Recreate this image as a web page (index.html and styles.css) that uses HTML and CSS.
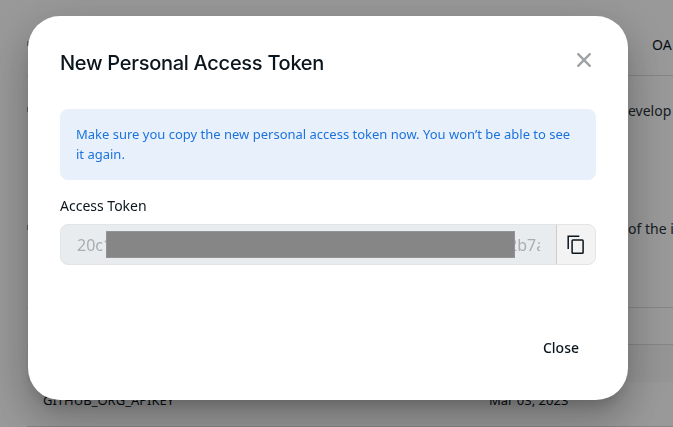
FILE: index.html
```html
<!DOCTYPE html>
<html lang="en">
<head>
<meta charset="utf-8">
<title>New Personal Access Token</title>
<link rel="stylesheet" href="styles.css">
</head>
<body>
<main class="page">
  <div class="row row-tabs"><i class="edge"></i><span class="tab">OA</span></div>
  <div class="row row-info">
    <p class="info"><i class="edge"></i>evelop</p>
    <p class="info"><i class="edge"></i>of the i</p>
  </div>
  <div class="row row-tools"></div>
  <div class="row row-head"></div>
  <div class="row row-token"><span class="token-name">GITHUB_ORG_APIKEY</span><span class="token-date">Mar 03, 2023</span></div>
</main>
<div class="backdrop">
  <section class="dialog" role="dialog" aria-modal="true">
    <header class="dialog-header">
      <h1 class="title">New Personal Access Token</h1>
      <button class="dismiss" type="button">
        <svg width="16" height="16" viewBox="0 0 16 16"><path d="M2.2 2.2 13.8 13.8M13.8 2.2 2.2 13.8"/></svg>
      </button>
    </header>
    <p class="notice">Make sure you copy the new personal access token now. You won’t be able to see it again.</p>
    <label class="label">Access Token</label>
    <div class="field">
      <div class="value"><span class="start">20c1</span><span class="mask"></span><span class="end"><span>2b7a</span></span></div>
      <button class="copy" type="button">
        <svg width="18" height="20" viewBox="0 0 18 20"><path d="M1.2 14V1.2H12.3"/><rect x="5.1" y="4.9" width="11" height="13.4" rx=".8"/></svg>
      </button>
    </div>
    <footer class="actions"><button class="close" type="button">Close</button></footer>
  </section>
</div>
</body>
</html>
```
FILE: styles.css
```css
* { box-sizing: border-box; }
body {
  margin: 0;
  width: 673px;
  height: 427px;
  overflow: hidden;
  background: #fff;
  color: #0b151d;
  font: 14px/20px "Noto Sans", sans-serif;
}
button { border: 0; padding: 0; background: none; color: inherit; font: inherit; }
svg { display: block; fill: none; }
.page { height: 427px; display: flex; flex-direction: column; }
.row { margin-left: 27px; border-bottom: 1px solid #dedede; flex: none; }
.row-tabs { height: 76px; padding-top: 35px; display: flex; white-space: nowrap; }
.tab { font-weight: 450; }
.edge { width: 2px; height: 5px; margin: 6px 599px 0 0; background: #999; flex: none; }
.row-tabs .edge { margin-right: 623px; }
.row-info {
  height: 232px;
  padding-top: 25px;
  display: flex;
  flex-direction: column;
  gap: 98px;
  white-space: nowrap;
}
.info { margin: 0; display: flex; color: #29323a; }
.row-tools { height: 37px; }
.row-head { height: 37px; background: #f8f8f8; border: 0; }
.row-token { height: 45px; padding: 8px 0 0 16px; display: flex; font-size: 13px; }
.token-name { width: 446px; }
.backdrop {
  position: fixed;
  inset: 0;
  padding: 16px 45px 27px 28px;
  background: rgba(0, 0, 0, .4);
}
.dialog {
  width: 600px;
  height: 384px;
  padding: 32px;
  border-radius: 32px;
  background: #fff;
  display: flex;
  flex-direction: column;
  box-shadow: 0 11px 15px -7px rgba(0, 0, 0, .2), 0 24px 38px 3px rgba(0, 0, 0, .14), 0 9px 46px 8px rgba(0, 0, 0, .12);
}
.dialog-header { height: 61px; display: flex; justify-content: space-between; }
.title {
  margin: 0;
  font: 500 20px/30px Inter, sans-serif;
  letter-spacing: -.28px;
  white-space: nowrap;
}
.dismiss { width: 24px; height: 24px; display: grid; place-items: center; }
.dismiss svg { stroke: #a0a3a5; stroke-width: 2.4; stroke-linecap: round; }
.notice {
  margin: 0;
  height: 71px;
  padding: 16px;
  border-radius: 8px;
  background: #e8f1fb;
  color: #1c72dc;
  font-size: 13px;
  line-height: 19.5px;
}
.label { margin-top: 16px; font-weight: 450; }
.field {
  height: 41px;
  margin-top: 8px;
  display: flex;
  border: 1px solid #e2e5e7;
  border-radius: 8px;
  background: #e8ecef;
  overflow: hidden;
}
.value {
  width: 495px;
  padding-left: 16px;
  display: flex;
  align-items: center;
  color: #a8adb0;
  font-size: 16px;
}
.start { width: 29px; overflow: hidden; flex: none; }
.mask { width: 409px; height: 27px; background: #868686; border: 1px solid #929394; flex: none; }
.end { width: 25px; display: flex; justify-content: flex-start; overflow: hidden; }
.end span { margin-left: -7px; }
.copy {
  flex: 1;
  display: grid;
  place-items: center;
  border-left: 1px solid #c9cdd0;
  background: #f3f3f3;
}
.copy svg { stroke: #0b151d; stroke-width: 1.5; }
.actions { margin-top: 64px; display: flex; justify-content: flex-end; }
.close { height: 38px; padding: 0 17px; font-weight: 500; }
```
